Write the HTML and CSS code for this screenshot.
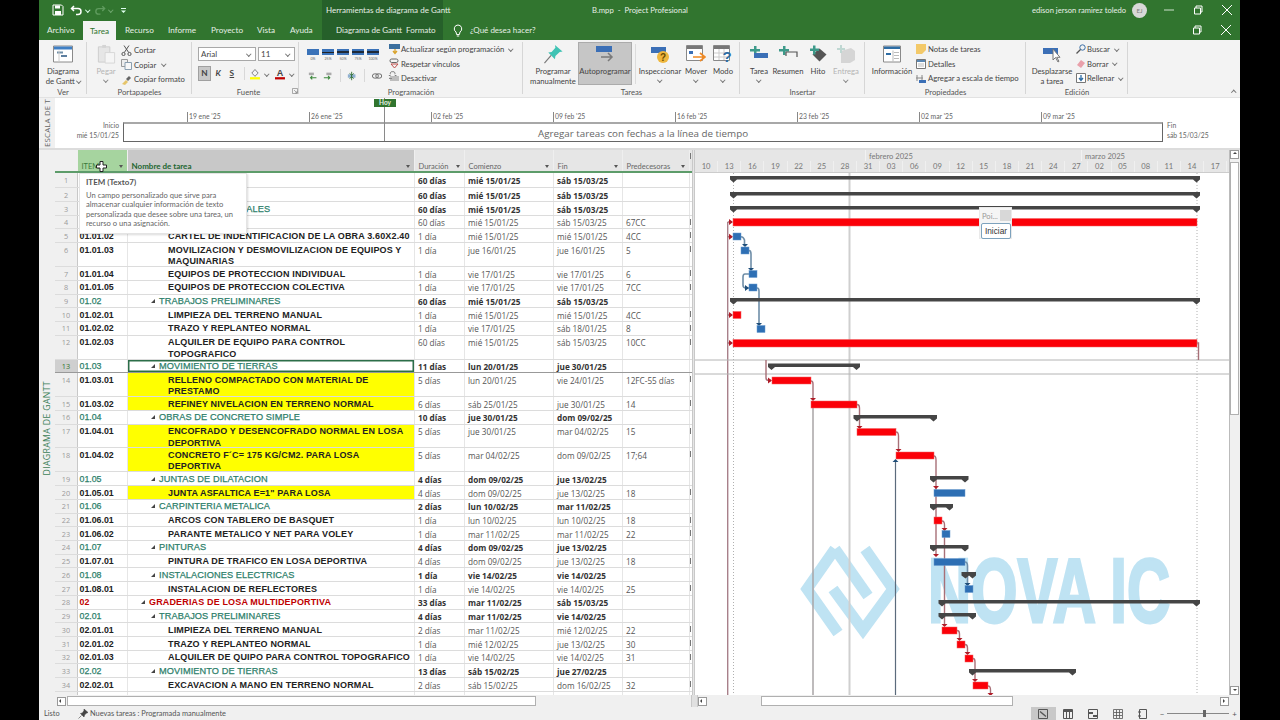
FILE: index.html
```html
<!DOCTYPE html>
<html lang="es">
<head>
<meta charset="utf-8">
<title>B.mpp - Project Profesional</title>
<link rel="stylesheet" href="styles.css">
</head>
<body>
<div class="app">
  <header class="title">
    <div class="qat">
      <svg width="12" height="12" viewBox="0 0 12 12"><path d="M1 1h8.5L11 2.5V11H1z" fill="none" stroke="#fff"/><path d="M3 1.5h5v3H3zM3 7h6v4H3z" fill="#fff"/></svg>
      <svg class="q-undo" width="13" height="12" viewBox="0 0 13 12"><path d="M4 2L1.5 4.5 4 7M2 4.5h6a3 3 0 0 1 0 6H6" fill="none" stroke="#fff" stroke-width="1.5"/></svg>
      <i class="chev white"></i>
      <svg class="q-redo" width="12" height="12" viewBox="0 0 13 12"><path d="M9 2l2.500 2.500L9 7M11 4.500H5a3 3 0 0 0 0 6h2" fill="none" stroke="#5f9b5e" stroke-width="1.500"/></svg>
      <i class="chev dim"></i>
      <svg class="q-custom" width="7" height="7" viewBox="0 0 7 7"><path d="M1 1h5v1H1zM1 3.500h5L3.500 6z" fill="#dfe"/></svg>
    </div>
    <div class="ctx-title">Herramientas de diagrama de Gantt</div>
    <div class="doc">B.mpp &nbsp;-&nbsp; Project Profesional</div>
    <div class="user">edison jerson ramirez toledo</div>
    <div class="avatar">EJ</div>
    <div class="win">
      <svg width="10" height="10" viewBox="0 0 10 10"><path d="M0 5h10" stroke="#cfe3cf"/></svg>
      <svg width="10" height="10" viewBox="0 0 10 10"><path d="M1.500 3h6v6h-6zM3 3V1h6v6H7.500" fill="none" stroke="#fff"/></svg>
      <svg width="10" height="10" viewBox="0 0 10 10"><path d="M0 0l10 10M10 0L0 10" stroke="#fff"/></svg>
    </div>
  </header>
  <nav class="tabs">
    <span class="tab t-archivo">Archivo</span>
    <span class="tab active">Tarea</span>
    <span class="tab t-rec">Recurso</span>
    <span class="tab t-inf">Informe</span>
    <span class="tab t-pro">Proyecto</span>
    <span class="tab t-vis">Vista</span>
    <span class="tab t-ayu">Ayuda</span>
    <span class="tab ctx">Diagrama de Gantt&nbsp; Formato</span>
    <svg class="bulb" width="10" height="13" viewBox="0 0 10 13"><path d="M5 1a3.800 3.800 0 0 0-2 7l.6 2.500h2.800L7 8a3.800 3.800 0 0 0-2-7zM3.800 12h2.400" fill="none" stroke="#fff"/></svg>
    <span class="tell">¿Qué desea hacer?</span>
    <div class="win win2">
      <svg width="10" height="10" viewBox="0 0 10 10"><path d="M1.500 3h6v6h-6zM3 3V1h6v6H7.500" fill="none" stroke="#fff"/></svg>
      <svg width="10" height="10" viewBox="0 0 10 10"><path d="M0 0l10 10M10 0L0 10" stroke="#fff"/></svg>
    </div>
  </nav>

  <section class="ribbon">
    <div class="grp g-ver">
      <div class="grp-body">
        <div class="big w-gantt">
          <svg width="20" height="17" viewBox="0 0 20 17"><path d="M.5.500h19v16H.500z" fill="#fff" stroke="#8a8a8a"/><path d="M1 1h18v3H1z" fill="#3f7fc4"/><path d="M4 6h6v2H4z" fill="#6f8fa8"/><path d="M8 9.500h6v2H8z" fill="#5d7fa0"/><path d="M6 5v11" stroke="#ccc"/></svg>
          <span>Diagrama</span><span>de Gantt <i class="chev"></i></span>
        </div>
      </div>
      <div class="grp-label">Ver</div>
    </div>

    <div class="grp g-port">
      <div class="grp-body">
        <div class="big w-paste off">
          <svg width="19" height="21" viewBox="0 0 19 21"><path d="M1 3h12v16H1z" fill="#e4e4e4" stroke="#c8c8c8"/><path d="M5 1h4v3H5z" fill="#cfcfcf"/><path d="M8 9h10v11H8z" fill="#f6f6f6" stroke="#d2d2d2"/></svg>
          <span>Pegar</span><i class="chev"></i>
        </div>
        <div class="small-col">
          <div class="sm"><svg width="11" height="11" viewBox="0 0 11 11"><circle cx="2.500" cy="9" r="1.600" fill="none" stroke="#555"/><circle cx="8.500" cy="9" r="1.600" fill="none" stroke="#555"/><path d="M3.300 7.500L8 .5M7.700 7.500L3 .5" stroke="#555"/></svg>Cortar</div>
          <div class="sm"><svg width="11" height="11" viewBox="0 0 11 11"><path d="M.5.500h6v7h-6z" fill="#eee" stroke="#999"/><path d="M4 3.500h6.500v7H4z" fill="#f7f7f7" stroke="#8a9fb0"/></svg>Copiar <i class="chev c-gap"></i></div>
          <div class="sm"><svg width="11" height="11" viewBox="0 0 11 11"><path d="M1 10l4-4 2 2-3 3z" fill="#e6c56a"/><path d="M5 5l3-3 2 2-3 3z" fill="#666"/></svg>Copiar formato</div>
        </div>
      </div>
      <div class="grp-label">Portapapeles</div>
    </div>

    <div class="grp g-font">
      <div class="grp-body col">
        <div class="font-row">
          <span class="select s-font">Arial<i class="chev"></i></span>
          <span class="select s-size">11<i class="chev"></i></span>
        </div>
        <div class="font-row r2">
          <span class="fmt on">N</span><span class="fmt it">K</span><span class="fmt un">S</span>
          <b class="vsep"></b>
          <svg width="11" height="12" viewBox="0 0 11 12"><path d="M5.500 1l3.500 4-3.500 3.500L2 5z" fill="#f4f4f4" stroke="#777"/><path d="M0 9.500h11V12H0z" fill="#ffff00"/></svg>
          <i class="chev c-fill"></i>
          <svg class="a-color" width="11" height="12" viewBox="0 0 11 12"><text x="5.500" y="8" text-anchor="middle" class="a-txt">A</text><path d="M0 9.500h11V12H0z" fill="#c00000"/></svg>
          <i class="chev c-fill"></i>
        </div>
      </div>
      <div class="grp-label">Fuente<svg class="launch" width="6" height="6" viewBox="0 0 6 6"><path d="M.5 5.500V.5h5v5zM2 2l3 3M5 3v2H3" fill="none" stroke="#888" stroke-width=".7"/></svg></div>
    </div>

    <div class="grp g-prog">
      <div class="grp-body">
        <div class="sched">
          <div class="pct-row">
            <span class="pct"><b></b>0%</span><span class="pct"><b class="p25"></b>25%</span><span class="pct"><b class="p50"></b>50%</span><span class="pct"><b class="p75"></b>75%</span><span class="pct"><b class="p100"></b>100%</span>
          </div>
          <div class="link-row">
            <svg width="11" height="10" viewBox="0 0 11 10"><path d="M1 1h6v3H1z" fill="#aaa"/><path d="M10 7H3M5 5L3 7l2 2" fill="none" stroke="#3e8a3e" stroke-width="1.300"/></svg>
            <svg width="11" height="10" viewBox="0 0 11 10"><path d="M4 1h6v3H4z" fill="#aaa"/><path d="M1 7h7M6 5l2 2-2 2" fill="none" stroke="#3e8a3e" stroke-width="1.300"/></svg>
            <b class="vsep"></b>
            <svg width="11" height="10" viewBox="0 0 11 10"><path d="M1 3h9v4H1z" fill="#8fb0d0"/><path d="M5.500 0v10M3 2l2.500 2L8 2M3 8l2.500-2L8 8" fill="none" stroke="#2a6a2a"/></svg>
            <b class="vsep"></b>
            <svg width="12" height="8" viewBox="0 0 12 8"><rect x=".5" y="1.500" width="7" height="5" rx="2.500" fill="none" stroke="#666" stroke-width="1.100"/><rect x="4.500" y="1.500" width="7" height="5" rx="2.500" fill="none" stroke="#666" stroke-width="1.100"/></svg>
            <svg width="11" height="11" viewBox="0 0 11 11"><path d="M3 4a2 2 0 0 1 2-3h1a2 2 0 0 1 2 3M3 7a2 2 0 0 0 2 3h1a2 2 0 0 0 2-3M1 5.500h2M8 5.500h2" fill="none" stroke="#666"/></svg>
          </div>
        </div>
        <div class="small-col">
          <div class="sm"><svg width="11" height="11" viewBox="0 0 11 11"><path d="M0 0h11v5H0z" fill="#3b6f9e"/><path d="M6 5v4M4 7l2 2.500L8 7" fill="none" stroke="#d9a32b" stroke-width="1.300"/></svg>Actualizar según programación <i class="chev c-gap"></i></div>
          <div class="sm"><svg width="11" height="11" viewBox="0 0 11 11"><rect x="1" y="1" width="8" height="3.500" rx="1.700" fill="none" stroke="#666"/><path d="M2 6l3.500 4L9 6z" fill="none" stroke="#c0504d"/></svg>Respetar vínculos</div>
          <div class="sm"><svg width="11" height="11" viewBox="0 0 11 11"><path d="M1 3h9v5H1z" fill="#bdbdbd"/><path d="M0 5.500h3" stroke="#888"/></svg>Desactivar</div>
        </div>
      </div>
      <div class="grp-label">Programación</div>
    </div>

    <div class="grp g-task">
      <div class="grp-body">
        <div class="big w-manual">
          <svg width="21" height="21" viewBox="0 0 21 21"><path d="M12 1l8 7-3 .5-4.500 4L12 16 5 9l3.500-.5 4-4.500z" fill="#3fc3b4"/><path d="M8 12l-7 8" stroke="#777" stroke-width="1.200"/></svg>
          <span>Programar</span><span>manualmente</span>
        </div>
        <div class="big w-auto">
          <svg width="20" height="18" viewBox="0 0 20 18"><path d="M1 1h16v6H1z" fill="#3b6fb6"/><path d="M6 12h11M13 8l4 4-4 4" fill="none" stroke="#7a7a7a" stroke-width="1.500"/></svg>
          <span>Autoprogramar</span>
        </div>
        <b class="gsep"></b>
        <div class="big w-insp">
          <svg width="20" height="20" viewBox="0 0 20 20"><path d="M1 3h15v6H1z" fill="#3b6fb6"/><circle cx="13" cy="13" r="6" fill="#efb73e"/><text x="13" y="16.500" text-anchor="middle" class="q-txt">?</text></svg>
          <span>Inspeccionar</span><i class="chev"></i>
        </div>
        <div class="big w-move">
          <svg width="20" height="20" viewBox="0 0 20 20"><path d="M.5 1.500h16v15H.5z" fill="#fff" stroke="#888"/><path d="M1 2h15v3H1z" fill="#777"/><path d="M3 7h4v3H3z" fill="#3b6fb6"/><path d="M7 13h11M14 9l5 4-5 4" fill="none" stroke="#f08a24" stroke-width="1.700"/></svg>
          <span>Mover</span><i class="chev"></i>
        </div>
        <div class="big w-mode">
          <svg width="20" height="20" viewBox="0 0 20 20"><path d="M.5 1.500h16v15H.5z" fill="#fff" stroke="#888"/><path d="M1 2h15v3H1z" fill="#777"/><path d="M6 5v11M11 5v11M1 9h15M1 13h15" stroke="#ccc"/><text x="14" y="18" text-anchor="middle" class="q2-txt">?</text></svg>
          <span>Modo</span><i class="chev"></i>
        </div>
      </div>
      <div class="grp-label">Tareas</div>
    </div>

    <div class="grp g-ins">
      <div class="grp-body">
        <div class="big w-itask">
          <svg width="19" height="16" viewBox="0 0 19 16"><path d="M4 0h2.500v3H10v2.500H6.500V9H4V5.500H0V3h4z" fill="#3d9a8a"/><path d="M4 7h14v5H4z" fill="#3b6fb6"/></svg>
          <span>Tarea</span><i class="chev"></i>
        </div>
        <div class="big w-sum">
          <svg width="19" height="16" viewBox="0 0 19 16"><path d="M4 0h2.500v3H10v2.500H6.500V9H4V5.500H0V3h4z" fill="#3d9a8a"/><path d="M7 6h11v5M7 6v4" fill="none" stroke="#555" stroke-width="1.200"/></svg>
          <span>Resumen</span>
        </div>
        <div class="big w-hito">
          <svg width="17" height="17" viewBox="0 0 17 17"><path d="M9.500 3l7 6-7 7-7-7z" fill="#555"/><path d="M3 0h2.500v3H9v2.500H5.500V9H3V5.500H0V3h3z" fill="#3d9a8a"/></svg>
          <span>Hito</span>
        </div>
        <div class="big w-ent off">
          <svg width="18" height="18" viewBox="0 0 18 18"><path d="M4 6l10-3 4 3v9l-5 3H4z" fill="#d0d0d0"/><path d="M3 0h2v3h3v2H5v3H3V5H0V3h3z" fill="#b7d3cd"/></svg>
          <span>Entrega</span><i class="chev"></i>
        </div>
      </div>
      <div class="grp-label">Insertar</div>
    </div>

    <div class="grp g-prop">
      <div class="grp-body">
        <div class="big w-info">
          <svg width="18" height="17" viewBox="0 0 18 17"><path d="M.5.500h17v16H.5z" fill="#fff" stroke="#8a8a8a"/><path d="M1 1h16v2.500H1z" fill="#2e6da4"/><path d="M3 7.500h5v2H3z" fill="#2e6da4"/><path d="M10 5v11M11 7h5M11 10h5M11 13h5" stroke="#bbb"/></svg>
          <span>Información</span>
        </div>
        <div class="small-col">
          <div class="sm"><svg width="10" height="10" viewBox="0 0 10 10"><path d="M0 0h10v6L6 10H0z" fill="#f3c969"/></svg>Notas de tareas</div>
          <div class="sm"><svg width="10" height="10" viewBox="0 0 10 10"><path d="M.5.500h9v9h-9z" fill="#fff" stroke="#777"/><path d="M1 1h8v2H1z" fill="#5b87b2"/><path d="M2 5h6M2 7h6" stroke="#bbb"/></svg>Detalles</div>
          <div class="sm"><svg width="10" height="10" viewBox="0 0 10 10"><path d="M0 5h7M1 2v6M6 2v6" stroke="#888"/><path d="M3 7h7v3H3z" fill="#3b6fb6"/></svg>Agregar a escala de tiempo</div>
        </div>
      </div>
      <div class="grp-label">Propiedades</div>
    </div>

    <div class="grp g-edit">
      <div class="grp-body">
        <div class="big w-goto">
          <svg width="18" height="18" viewBox="0 0 18 18"><path d="M0 3h15v6H0z" fill="#3b6fb6"/><path d="M10 4v11l2.500-2.500L15 17l1-.7-2.300-4H17z" fill="#fff" stroke="#777"/></svg>
          <span>Desplazarse</span><span>a tarea</span>
        </div>
        <div class="small-col">
          <div class="sm"><svg width="10" height="10" viewBox="0 0 10 10"><circle cx="6.500" cy="3.500" r="2.700" fill="none" stroke="#3a6ea5"/><path d="M4.500 5.500L.5 9.500" stroke="#555" stroke-width="1.200"/></svg>Buscar <i class="chev c-gap"></i></div>
          <div class="sm"><svg width="10" height="10" viewBox="0 0 10 10"><path d="M5 1l4 3-4 5-4-3z" fill="#e9a0aa"/></svg>Borrar <i class="chev"></i></div>
          <div class="sm"><svg width="10" height="10" viewBox="0 0 10 10"><path d="M.5.500h9v9h-9z" fill="#fff" stroke="#777"/><path d="M5 2v5M3 5l2 2.500L7 5" fill="none" stroke="#2e6da4" stroke-width="1.300"/></svg>Rellenar <i class="chev"></i></div>
        </div>
      </div>
      <div class="grp-label">Edición</div>
    </div>
    <div class="collapse"><i class="chev up"></i></div>
  </section>

  <section class="timeline">
    <div class="rail"><span class="rail-txt">ESCALA DE T</span></div>
    <div class="tl-start"><span>Inicio</span><span>mié 15/01/25</span></div>
    <div class="tl-mid">
      <div class="tl-ticks">
        <span>19 ene '25</span><span>26 ene '25</span><span>02 feb '25</span><span>09 feb '25</span><span>16 feb '25</span><span>23 feb '25</span><span>02 mar '25</span><span>09 mar '25</span>
      </div>
      <div class="tl-box">Agregar tareas con fechas a la línea de tiempo</div>
      <div class="today"><span>Hoy</span></div>
    </div>
    <div class="tl-end"><span>Fin</span><span>sáb 15/03/25</span></div>
  </section>
  <div class="split"></div>

  <section class="work">
    <div class="rail"><span class="rail-txt green">DIAGRAMA DE GANTT</span></div>
    <div class="center">
      <div class="panes">
        <div class="sheet">
          <div class="row head">
            <span class="num"></span>
            <span class="h-item">ITEM<i class="dd"></i></span>
            <span class="h-name">Nombre de tarea<i class="dd"></i></span>
            <span>Duración<i class="dd"></i></span><span>Comienzo<i class="dd"></i></span><span>Fin<i class="dd"></i></span><span>Predecesoras<i class="dd"></i></span><span class="x"></span>
          </div>
          <svg class="cursor" width="11" height="11" viewBox="0 0 11 11"><path d="M4 .5h3V4h3.500v3H7v3.500H4V7H.5V4H4z" fill="#fff" stroke="#222"/></svg>
          <div class="rows">
            <div class="row first sum"><span class="num">1</span><span class="id">00</span><span class="name lv1 tw">LOSA</span><span>60 días</span><span>mié 15/01/25</span><span>sáb 15/03/25</span><span></span><span class="x"></span></div>
            <div class="row sum"><span class="num">2</span><span class="id red">01</span><span class="name lv1 tw red">LOSA</span><span>60 días</span><span>mié 15/01/25</span><span>sáb 15/03/25</span><span></span><span class="x"></span></div>
            <div class="row sum"><span class="num">3</span><span class="id grn">01.01</span><span class="name lv2 tw grn">OBRAS PROVISIONALES</span><span>60 días</span><span>mié 15/01/25</span><span>sáb 15/03/25</span><span></span><span class="x"></span></div>
            <div class="row"><span class="num">4</span><span class="id">01.01.01</span><span class="name lv3">CASETA</span><span>60 días</span><span>mié 15/01/25</span><span>sáb 15/03/25</span><span>67CC</span><span class="x"></span></div>
            <div class="row"><span class="num">5</span><span class="id">01.01.02</span><span class="name lv3">CARTEL DE INDENTIFICACION DE LA OBRA 3.60X2.40</span><span>1 día</span><span>mié 15/01/25</span><span>mié 15/01/25</span><span>4CC</span><span class="x"></span></div>
            <div class="row tall"><span class="num">6</span><span class="id">01.01.03</span><span class="name lv3">MOVILIZACION Y DESMOVILIZACION DE EQUIPOS Y<br>MAQUINARIAS</span><span>1 día</span><span>jue 16/01/25</span><span>jue 16/01/25</span><span>5</span><span class="x"></span></div>
            <div class="row"><span class="num">7</span><span class="id">01.01.04</span><span class="name lv3">EQUIPOS DE PROTECCION INDIVIDUAL</span><span>1 día</span><span>vie 17/01/25</span><span>vie 17/01/25</span><span>6</span><span class="x"></span></div>
            <div class="row"><span class="num">8</span><span class="id">01.01.05</span><span class="name lv3">EQUIPOS DE PROTECCION COLECTIVA</span><span>1 día</span><span>vie 17/01/25</span><span>vie 17/01/25</span><span>7CC</span><span class="x"></span></div>
            <div class="row sum"><span class="num">9</span><span class="id grn">01.02</span><span class="name lv2 tw grn">TRABAJOS PRELIMINARES</span><span>60 días</span><span>mié 15/01/25</span><span>sáb 15/03/25</span><span></span><span class="x"></span></div>
            <div class="row"><span class="num">10</span><span class="id">01.02.01</span><span class="name lv3">LIMPIEZA DEL TERRENO MANUAL</span><span>1 día</span><span>mié 15/01/25</span><span>mié 15/01/25</span><span>4CC</span><span class="x"></span></div>
            <div class="row"><span class="num">11</span><span class="id">01.02.02</span><span class="name lv3">TRAZO Y REPLANTEO NORMAL</span><span>1 día</span><span>vie 17/01/25</span><span>sáb 18/01/25</span><span>8</span><span class="x"></span></div>
            <div class="row tall"><span class="num">12</span><span class="id">01.02.03</span><span class="name lv3">ALQUILER DE EQUIPO PARA CONTROL<br>TOPOGRAFICO</span><span>60 días</span><span>mié 15/01/25</span><span>sáb 15/03/25</span><span>10CC</span><span class="x"></span></div>
            <div class="row sum sel"><span class="num">13</span><span class="id grn">01.03</span><span class="name lv2 tw grn">MOVIMIENTO DE TIERRAS</span><span>11 días</span><span>lun 20/01/25</span><span>jue 30/01/25</span><span></span><span class="x"></span></div>
            <div class="row tall"><span class="num">14</span><span class="id">01.03.01</span><span class="name lv3 yel">RELLENO COMPACTADO CON MATERIAL DE<br>PRESTAMO</span><span>5 días</span><span>lun 20/01/25</span><span>vie 24/01/25</span><span>12FC-55 días</span><span class="x"></span></div>
            <div class="row"><span class="num">15</span><span class="id">01.03.02</span><span class="name lv3 yel">REFINEY NIVELACION EN TERRENO NORMAL</span><span>6 días</span><span>sáb 25/01/25</span><span>jue 30/01/25</span><span>14</span><span class="x"></span></div>
            <div class="row sum"><span class="num">16</span><span class="id grn">01.04</span><span class="name lv2 tw grn">OBRAS DE CONCRETO SIMPLE</span><span>10 días</span><span>jue 30/01/25</span><span>dom 09/02/25</span><span></span><span class="x"></span></div>
            <div class="row tall"><span class="num">17</span><span class="id">01.04.01</span><span class="name lv3 yel">ENCOFRADO Y DESENCOFRADO NORMAL EN LOSA<br>DEPORTIVA</span><span>5 días</span><span>jue 30/01/25</span><span>mar 04/02/25</span><span>15</span><span class="x"></span></div>
            <div class="row tall"><span class="num">18</span><span class="id">01.04.02</span><span class="name lv3 yel">CONCRETO F´C= 175 KG/CM2. PARA LOSA<br>DEPORTIVA</span><span>5 días</span><span>mar 04/02/25</span><span>dom 09/02/25</span><span>17;64</span><span class="x"></span></div>
            <div class="row sum"><span class="num">19</span><span class="id grn">01.05</span><span class="name lv2 tw grn">JUNTAS DE DILATACION</span><span>4 días</span><span>dom 09/02/25</span><span>jue 13/02/25</span><span></span><span class="x"></span></div>
            <div class="row"><span class="num">20</span><span class="id">01.05.01</span><span class="name lv3 yel">JUNTA ASFALTICA E=1" PARA LOSA</span><span>4 días</span><span>dom 09/02/25</span><span>jue 13/02/25</span><span>18</span><span class="x"></span></div>
            <div class="row sum"><span class="num">21</span><span class="id grn">01.06</span><span class="name lv2 tw grn">CARPINTERIA METALICA</span><span>2 días</span><span>lun 10/02/25</span><span>mar 11/02/25</span><span></span><span class="x"></span></div>
            <div class="row"><span class="num">22</span><span class="id">01.06.01</span><span class="name lv3">ARCOS CON TABLERO DE BASQUET</span><span>1 día</span><span>lun 10/02/25</span><span>lun 10/02/25</span><span>18</span><span class="x"></span></div>
            <div class="row"><span class="num">23</span><span class="id">01.06.02</span><span class="name lv3">PARANTE METALICO Y NET PARA VOLEY</span><span>1 día</span><span>mar 11/02/25</span><span>mar 11/02/25</span><span>22</span><span class="x"></span></div>
            <div class="row sum"><span class="num">24</span><span class="id grn">01.07</span><span class="name lv2 tw grn">PINTURAS</span><span>4 días</span><span>dom 09/02/25</span><span>jue 13/02/25</span><span></span><span class="x"></span></div>
            <div class="row"><span class="num">25</span><span class="id">01.07.01</span><span class="name lv3">PINTURA DE TRAFICO EN LOSA DEPORTIVA</span><span>4 días</span><span>dom 09/02/25</span><span>jue 13/02/25</span><span>18</span><span class="x"></span></div>
            <div class="row sum"><span class="num">26</span><span class="id grn">01.08</span><span class="name lv2 tw grn">INSTALACIONES ELECTRICAS</span><span>1 día</span><span>vie 14/02/25</span><span>vie 14/02/25</span><span></span><span class="x"></span></div>
            <div class="row"><span class="num">27</span><span class="id">01.08.01</span><span class="name lv3">INSTALACION DE REFLECTORES</span><span>1 día</span><span>vie 14/02/25</span><span>vie 14/02/25</span><span>25</span><span class="x"></span></div>
            <div class="row sum"><span class="num">28</span><span class="id red">02</span><span class="name lv1 tw red">GRADERIAS DE LOSA MULTIDEPORTIVA</span><span>33 días</span><span>mar 11/02/25</span><span>sáb 15/03/25</span><span></span><span class="x"></span></div>
            <div class="row sum"><span class="num">29</span><span class="id grn">02.01</span><span class="name lv2 tw grn">TRABAJOS PRELIMINARES</span><span>4 días</span><span>mar 11/02/25</span><span>vie 14/02/25</span><span></span><span class="x"></span></div>
            <div class="row"><span class="num">30</span><span class="id">02.01.01</span><span class="name lv3">LIMPIEZA DEL TERRENO MANUAL</span><span>2 días</span><span>mar 11/02/25</span><span>mié 12/02/25</span><span>22</span><span class="x"></span></div>
            <div class="row"><span class="num">31</span><span class="id">02.01.02</span><span class="name lv3">TRAZO Y REPLANTEO NORMAL</span><span>1 día</span><span>mié 12/02/25</span><span>jue 13/02/25</span><span>30</span><span class="x"></span></div>
            <div class="row"><span class="num">32</span><span class="id">02.01.03</span><span class="name lv3">ALQUILER DE QUIPO PARA CONTROL TOPOGRAFICO</span><span>1 día</span><span>vie 14/02/25</span><span>vie 14/02/25</span><span>31</span><span class="x"></span></div>
            <div class="row sum"><span class="num">33</span><span class="id grn">02.02</span><span class="name lv2 tw grn">MOVIMIENTO DE TIERRAS</span><span>13 días</span><span>sáb 15/02/25</span><span>jue 27/02/25</span><span></span><span class="x"></span></div>
            <div class="row"><span class="num">34</span><span class="id">02.02.01</span><span class="name lv3">EXCAVACION A MANO EN TERRENO NORMAL</span><span>2 días</span><span>sáb 15/02/25</span><span>dom 16/02/25</span><span>32</span><span class="x"></span></div>
            <div class="row tall"><span class="num">35</span><span class="id">02.02.02</span><span class="name lv3">RELLENO COMPACTADO CON MATERIAL DE<br>PRESTAMO</span><span>3 días</span><span>lun 17/02/25</span><span>mié 19/02/25</span><span>34</span><span class="x"></span></div>
          </div>
          <div class="tooltip">
            <strong>ITEM (Texto7)</strong>
            <p>Un campo personalizado que sirve para almacenar cualquier información de texto personalizada que desee sobre una tarea, un recurso o una asignación.</p>
          </div>
        </div>
        <div class="sash"></div>
        <div class="chart">
          <div class="scale">
            <div class="months"><span class="m0"></span><span class="m1">febrero 2025</span><span class="m2">marzo 2025</span></div>
            <div class="days"><span>10</span><span>13</span><span>16</span><span>19</span><span>22</span><span>25</span><span>28</span><span>31</span><span>03</span><span>06</span><span>09</span><span>12</span><span>15</span><span>18</span><span>21</span><span>24</span><span>27</span><span>02</span><span>05</span><span>08</span><span>11</span><span>14</span><span>17</span></div>
          </div>
          <svg class="plot" width="534" height="522" viewBox="695 173 534 522">
            <text x="928" y="622" textLength="242" lengthAdjust="spacingAndGlyphs" class="wm-text">NOVA IC</text>
            <g class="wm-logo">
              <path d="M835 549L807 589L838 633"/>
              <path d="M835 549L868 596"/>
              <path d="M865 549L893 589L863 630L833 589"/>
            </g>
            <g class="v-lines">
              <path class="vl-today" d="M849.500 173V695"/>
              <path class="vl-gray" d="M813 405V695"/>
              <path class="vl-navy" d="M895.500 462V695"/>
              <path class="vl-red" d="M727.700 222V695"/>
              <path class="vl-dot" d="M733.500 173V695M1197 173V695"/>
              <path class="hl" d="M695 360H1229M695 374H1229"/>
            </g>
            <g class="lnk-red">
              <path d="M727.700 222H732M727.700 236.700H732M727.700 315H732M727.700 343H732M1197 343H1198.500V360"/>
              <path d="M766 360V378Q766 380.500 769 380.500H771"/>
              <path d="M811 381Q813 381 813 384V400"/>
              <path d="M857 404.500Q859.500 404.500 859.500 408V428"/>
              <path d="M896 432Q898.500 432 898.500 436V451"/>
              <path d="M934 456Q936 456 936 460V556"/>
              <path d="M942 521Q944.500 521 944.500 525V626"/>
              <path d="M957 630.500Q959.500 630.500 959.500 634V640"/>
              <path d="M965 644.500Q967.500 644.500 967.500 648V654"/>
              <path d="M973 658.500Q975 658.500 975 662V681"/>
              <path d="M988 686Q990.500 686 990.500 690V695"/>
            </g>
            <g class="lnk-blue">
              <path d="M741 236.700Q743.500 236.700 744.500 240V246"/>
              <path d="M749 250.500Q751 250.500 751 254V270"/>
              <path d="M749 274H745Q743 274 743 277V285Q743 288 746 288H749"/>
              <path d="M757 288Q759 288 759 291V325"/>
              <path d="M965 562Q967.500 562 967.500 566V585"/>
              <path d="M942 534H944"/>
            </g>
            <path class="ar-red" d="M733 222l-4-3v6zM733 236.700l-4-3v6zM733 315l-4-3v6zM733 343l-4-3v6zM772 380.500l-4-3v6zM813 401l-3-3h6zM859.500 429l-3-3h6zM898.500 452l-3-3h6zM936 489l-3-3h6zM936 557l-3-3h6zM944.500 531l-3-3h6zM944.500 627l-3-3h6zM959.500 641l-3-3h6zM967.500 655l-3-3h6zM975 682l-3-3h6zM990.500 696l-3-3h6z"/>
            <path class="ar-blue" d="M745 247l-3-3h6zM751 271l-3-3h6zM749 288l-4-3v6zM759 326l-3-3h6zM967.500 586l-3-3h6zM895.500 459l3 3h-6z"/>
            <g class="bar-sum">
              <path d="M730 176H1200v3.500l-3.500 3-3.500-3H737l-3.500 3-3.500-3z"/>
              <path d="M730 192H1200v3.500l-3.500 3-3.500-3H737l-3.500 3-3.500-3z"/>
              <path d="M730 206H1200v3.500l-3.500 3-3.500-3H737l-3.500 3-3.500-3z"/>
              <path d="M730 298H1200v3.500l-3.500 3-3.500-3H737l-3.500 3-3.500-3z"/>
              <path d="M768 363.500H860v3.500l-3.500 3-3.500-3H775l-3.500 3-3.500-3z"/>
              <path d="M853.500 415H937v3.500l-3.500 3-3.500-3H860.500l-3.500 3-3.500-3z"/>
              <path d="M930 476H968.500v3.500l-3.500 3-3.500-3H937l-3.500 3-3.500-3z"/>
              <path d="M930 504H953v3.500l-3.500 3-3.500-3H937l-3.500 3-3.500-3z"/>
              <path d="M930 545H968.500v3.500l-3.500 3-3.500-3H937l-3.500 3-3.500-3z"/>
              <path d="M961.500 572H976v3.500l-3.500 3-3.500-3h0l-3.500 3-4-3z"/>
              <path d="M938.500 600H1200v3.500l-3.500 3-3.500-3H945.500l-3.500 3-3.500-3z"/>
              <path d="M938.500 613H976v3.500l-3.500 3-3.500-3H945.500l-3.500 3-3.500-3z"/>
              <path d="M969 669H1076v3.500l-3.500 3-3.500-3H976l-3.500 3-3.500-3z"/>
            </g>
            <g class="bar-red">
              <rect x="733" y="218.500" width="464" height="7.500"/>
              <rect x="733" y="311.500" width="8" height="7"/>
              <rect x="733" y="339.500" width="464" height="7.500"/>
              <rect x="772" y="377" width="39" height="7"/>
              <rect x="811" y="401" width="46" height="7"/>
              <rect x="857" y="428.500" width="39" height="7"/>
              <rect x="896" y="452" width="38" height="7"/>
              <rect x="934" y="517" width="8" height="7"/>
              <rect x="942" y="627" width="15" height="7"/>
              <rect x="957" y="641" width="8" height="7"/>
              <rect x="965" y="655" width="8" height="7"/>
              <rect x="973" y="682" width="15" height="7"/>
            </g>
            <g class="bar-blue">
              <rect x="733" y="233" width="8" height="7"/>
              <rect x="741" y="247" width="8" height="7"/>
              <rect x="749" y="270.500" width="8" height="7"/>
              <rect x="749" y="284" width="8" height="7"/>
              <rect x="757" y="325.500" width="8" height="7"/>
              <rect x="934" y="489.500" width="31" height="7"/>
              <rect x="942" y="530.500" width="8" height="7"/>
              <rect x="934" y="558.500" width="31" height="7"/>
              <rect x="965" y="585.500" width="8" height="7"/>
            </g>
          </svg>
          <div class="popup">
            <div class="pop-head"><span>Poi...</span><b></b></div>
            <div class="pop-btn">Iniciar</div>
          </div>
        </div>
        <div class="vbar"><span class="btn up-b"></span><span class="v-thumb"></span><span class="v-fill"></span><span class="btn dn-b"></span></div>
      </div>
      <div class="hbar">
        <span class="btn l-b"></span><span class="h-thumb t-left"></span><span class="h-fill"></span>
        <span class="h-gap"></span>
        <span class="btn l-b"></span><span class="h-sp"></span><span class="h-thumb t-right"></span><span class="h-fill"></span><span class="btn r-b"></span>
      </div>
    </div>
  </section>

  <footer class="status">
    <span class="st-ready">Listo</span>
    <svg class="st-pin" width="10" height="10" viewBox="0 0 10 10"><path d="M6 0l4 3.500-1.500.5L6.500 6 6 8 2.500 4.500l2-.5L6 1.500zM3.500 6.500L.5 9.500" fill="#444" stroke="#444" stroke-width=".6"/></svg>
    <span class="st-new">Nuevas tareas : Programada manualmente</span>
    <div class="views">
      <span class="view on"><svg width="10" height="10" viewBox="0 0 10 10"><path d="M.5.500h9v9h-9z" fill="none" stroke="#555"/><path d="M2 2.500l6 5" stroke="#555" stroke-width="1.400"/></svg></span>
      <span class="view"><svg width="10" height="10" viewBox="0 0 10 10"><path d="M.5.500h9v9h-9z" fill="none" stroke="#555"/><path d="M1 1h8v2H1z" fill="#555"/><path d="M3.500 3v6M6.500 3v6" stroke="#555"/></svg></span>
      <span class="view"><svg width="10" height="10" viewBox="0 0 10 10"><path d="M.5.500h9v9h-9z" fill="none" stroke="#555"/><path d="M1 3h4v2H1zM5 6h4v2H5z" fill="#555"/></svg></span>
      <span class="view"><svg width="10" height="10" viewBox="0 0 10 10"><path d="M.5.500h9v9h-9zM3.500 1v8M6.500 1v8M1 3.500h8M1 6.500h8" fill="none" stroke="#555" stroke-width=".8"/></svg></span>
      <span class="view"><svg width="10" height="10" viewBox="0 0 10 10"><path d="M2.500.5h7v9h-7zM1 3h3M1 7h3" fill="none" stroke="#555"/></svg></span>
      <div class="zoom"><span>−</span><div class="slider"><b></b></div><span>+</span></div>
    </div>
  </footer>
</div>
</body>
</html>
```
FILE: styles.css
```css
* { box-sizing: border-box; }
html, body { margin: 0; height: 100%; background: #000; overflow: hidden; }
body { font-family: Lato, "Liberation Sans", sans-serif; font-size: 8.2px; color: #444; }
i, b { display: inline-block; font-style: normal; }
.app { width: 1201px; height: 720px; margin-left: 39px; display: flex; flex-direction: column; background: #fff; }

/* title bar */
.title { height: 20px; background: #31752f; color: #e6efe6; display: flex; align-items: center; position: relative; }
.qat { display: flex; align-items: center; padding-left: 13px; width: 283px; }
.q-undo { margin-left: 6px; }
.q-redo { margin-left: 4px; }
.q-custom { margin-left: 8px; }
.ctx-title { width: 121px; height: 20px; line-height: 20px; background: #26602a; padding-left: 4px; white-space: nowrap; font-size: 8px; }
.doc { width: 244px; padding-left: 149px; white-space: nowrap; font-size: 7.700px; }
.user { margin-left: 345px; white-space: nowrap; font-size: 7.600px; width: 100px; }
.avatar { width: 15px; height: 15px; border-radius: 50%; background: #d8d8d8; color: #7b7b7b; font-size: 6px; text-align: center; line-height: 15px; margin-left: 0; }
.win { display: flex; gap: 19px; margin-left: 17px; }
.win2 { position: absolute; right: 9px; top: 5px; margin: 0; }

/* tabs */
.tabs { height: 20px; background: #31752f; display: flex; align-items: center; color: #e6efe6; position: relative; font-size: 8.200px; }
.tab { white-space: nowrap; }
.t-archivo { margin-left: 8px; width: 36px; }
.tab.active { background: #f3f3f3; color: #31752f; width: 33px; height: 19px; line-height: 20px; text-align: center; margin-top: 1px; }
.t-rec { margin-left: 9px; width: 43px; }
.t-inf { width: 43px; }
.t-pro { width: 46px; }
.t-vis { width: 33px; }
.t-ayu { width: 32px; }
.tab.ctx { background: #26602a; width: 121px; height: 20px; line-height: 20px; padding-left: 14px; font-size: 8px; }
.bulb { margin-left: 10px; }
.tell { margin-left: 7px; font-size: 8px; }

/* ribbon */
.ribbon { height: 58px; background: #f3f3f3; display: flex; position: relative; color: #444; border-bottom: 1px solid #e2e2e2; font-size: 7.700px; }
.grp { display: flex; flex-direction: column; position: relative; padding-top: 2px; }
.grp::after { content: ""; position: absolute; right: 0; top: 2px; bottom: 3px; width: 1px; background: #d6d6d6; }
.grp-body { height: 46px; display: flex; }
.grp-body.col { flex-direction: column; }
.grp-label { text-align: center; font-size: 7.700px; line-height: 9px; color: #555; }
.g-ver { width: 48px; }
.g-port { width: 105px; }
.g-font { width: 107px; padding-left: 6px; }
.g-prog { width: 224px; }
.g-task { width: 217px; }
.g-ins { width: 125px; }
.g-prop { width: 161px; }
.g-edit { width: 102px; }
.collapse { flex: 1; position: relative; }

.big { display: flex; flex-direction: column; align-items: center; line-height: 10px; padding-top: 2px; white-space: nowrap; flex: none; }
.big svg { height: 20px; margin-bottom: 2px; flex: none; }
.off { color: #aaa; opacity: .85; }
.chev { width: 3.500px; height: 3.500px; border-right: 1px solid #777; border-bottom: 1px solid #777; transform: rotate(45deg); vertical-align: 2px; flex: none; }
.chev.white { border-color: #dfe; margin-left: 3px; }
.chev.dim { border-color: #6fa66e; margin-left: 3px; }
.chev.up { position: absolute; right: 5px; bottom: 3px; transform: rotate(225deg); }
.c-gap { margin-left: 3px; }

.w-gantt { width: 48px; }
.w-paste { width: 36px; margin-left: 1px; }
.small-col { display: flex; flex-direction: column; padding-top: 0; }
.sm { height: 14.500px; display: flex; align-items: center; white-space: nowrap; line-height: 14px; gap: 2px; }
.sm svg { flex: none; }
.sm .chev { margin-left: 4px; margin-top: -2px; }
.g-port .small-col { margin-left: -3px; padding-top: 1px; }
.g-port .sm { gap: 2px; }

.font-row { display: flex; align-items: center; }
.font-row:first-child { margin-top: 5px; gap: 2px; }
.r2 { margin-top: 5px; }
.select { height: 14px; border: 1px solid #a8a8a8; background: #fff; display: flex; align-items: center; justify-content: space-between; padding: 0 5px 0 2px; font-size: 8px; }
.s-font { width: 58px; }
.s-size { width: 37px; }
.fmt { width: 14px; height: 15px; text-align: center; line-height: 14px; font-weight: 700; font-size: 8.300px; margin-right: 1px; color: #444; }
.fmt.on { background: #c8c8c8; border: 1px solid #a0a0a0; line-height: 13px; }
.fmt.it { font-style: italic; }
.fmt.un { text-decoration: underline; }
.vsep { width: 1px; height: 13px; background: #d8d8d8; margin: 0 5px; }
.c-fill { margin: 0 6px 0 5px; }
.a-txt { font: 700 10px "Liberation Sans", sans-serif; fill: #444; }
.launch { position: absolute; right: 1px; bottom: 3px; }

.sched { width: 90px; margin-left: 8px; padding-top: 7px; }
.pct-row { display: flex; gap: 3px; }
.pct { width: 12px; font-size: 3.600px; line-height: 5px; text-align: center; white-space: nowrap; color: #666; }
.pct b { display: block; height: 6px; background: #3a72b8; margin-bottom: 1px; }
.pct b.p25 { background: linear-gradient(#3a72b8 50%, #222 50%, #222 65%, #3a72b8 65%); }
.pct b.p50, .pct b.p75, .pct b.p100 { background: linear-gradient(#3a72b8 40%, #1f2a38 40%, #1f2a38 70%, #3a72b8 70%); }
.link-row { display: flex; align-items: center; gap: 6px; margin-top: 8px; padding-left: 1px; }
.link-row .vsep { margin: 0 1px; }
.g-prog .small-col { margin-left: -8px; }
.g-prog .sm { gap: 1px; }

.g-task .grp-body { padding-left: 7px; }
.w-manual { width: 46px; }
.w-auto { width: 54px; height: 43px; margin-left: 2px; background: #c6c6c6; border: 1px solid #ababab; margin-top: 0; padding-top: 1px; }
.gsep { width: 1px; height: 40px; background: #dcdcdc; margin: 2px 2px 0 3px; }
.w-insp { width: 44px; }
.w-move { width: 26px; margin-left: 1px; }
.w-mode { width: 26px; margin-left: 1px; }
.big > .chev { margin-top: 2px; }
.q-txt { font: 700 10px "Liberation Sans", sans-serif; fill: #6a4a00; }
.q2-txt { font: 700 15px "Liberation Sans", sans-serif; fill: #2e6da4; }

.g-ins .grp-body { padding-left: 8px; }
.w-itask { width: 22px; }
.w-sum { width: 32px; margin-left: 2px; }
.w-hito { width: 20px; margin-left: 4px; }
.w-ent { width: 30px; margin-left: 3px; }

.g-prop .grp-body { padding-left: 5px; }
.w-info { width: 44px; }
.g-prop .small-col { margin-left: 2px; }
.g-prop .sm { gap: 2px; }

.g-edit .grp-body { padding-left: 5px; }
.w-goto { width: 42px; }
.g-edit .small-col { margin-left: 3px; }
.g-edit .sm { gap: 1px; }

/* timeline */
.timeline { height: 50px; background: #fff; display: flex; position: relative; font-size: 6.800px; color: #666; }
.rail { width: 16px; background: #f0f0f0; display: flex; align-items: center; justify-content: center; flex: none; }
.rail-txt { writing-mode: vertical-rl; transform: rotate(180deg); white-space: nowrap; font-family: "Open Sans", sans-serif; font-size: 7.800px; color: #666; letter-spacing: .2px; }
.rail-txt.green { color: #3c7f58; font-size: 8.800px; letter-spacing: .3px; }
.tl-start, .tl-end { display: flex; flex-direction: column; padding-top: 23px; line-height: 9.500px; white-space: nowrap; }
.tl-start { width: 68px; text-align: right; padding-right: 4px; }
.tl-end { padding-left: 4px; }
.tl-mid { width: 1040px; position: relative; padding-top: 14px; }
.tl-ticks { display: flex; height: 10px; padding-left: 64px; line-height: 8px; }
.tl-ticks span { width: 122.400px; border-left: 1px solid #888; padding-left: 1px; white-space: nowrap; }
.tl-box { height: 20px; border: 1px solid #666; border-top: 2px solid #a8a8a8; text-align: center; font-family: "Open Sans", sans-serif; font-size: 9.800px; line-height: 19px; color: #666; }
.today { position: absolute; left: 261px; top: 0; height: 43px; border-left: 1px solid #8a8a8a; }
.today span { position: absolute; left: -11px; top: 1px; width: 22px; height: 8px; background: #31752f; color: #e8f2e8; font-size: 6.500px; font-weight: 700; text-align: center; line-height: 8px; }
.split { height: 2px; background: #dcdcdc; }

/* work area */
.work { flex: 1; display: flex; min-height: 0; }
.center { flex: 1; display: flex; flex-direction: column; min-width: 0; }
.panes { height: 545px; display: flex; }
.sheet { width: 637px; position: relative; overflow: hidden; flex: none; }
.sash { width: 3px; background: #e6e6e6; border-left: 1px solid #c8c8c8; border-right: 1px solid #c8c8c8; flex: none; }
.chart { width: 534px; position: relative; flex: none; }
.vbar { width: 11px; background: #f0f0f0; display: flex; flex-direction: column; flex: none; border-left: 1px solid #bbb; }

.row { display: grid; grid-template-columns: 23px 50px 287px 50px 89px 69px 67px 2px; height: 13.730px; border-bottom: 1px solid #dcdcdc; }
.row > span { padding: 1.500px 0 0 3px; line-height: 11.500px; white-space: nowrap; overflow: hidden; border-right: 1px solid #e6e6e6; font-family: "Open Sans", sans-serif; font-size: 8.200px; color: #555; }
.row.first { height: 15.300px; }
.row.tall { height: 23.900px; }
.row.sum > span { font-weight: 700; color: #333; }
.row > .num, .row.sum > .num { background: #f0f0f0; color: #9a9a9a; font-weight: 400; text-align: center; padding-left: 0; border-right: 1px solid #c8c8c8; font-size: 7.300px; }
.rows { overflow: hidden; height: 522px; }
.row > .id { font: 700 8.800px/11.500px "Liberation Sans", sans-serif; color: #222; padding-left: 1.500px; }
.row > .name { font: 700 9px/11.500px "Liberation Sans", sans-serif; color: #222; white-space: nowrap; letter-spacing: .15px; }
.row.sum > .id, .row.sum > .name { font-family: "Liberation Sans", sans-serif; font-weight: 400; -webkit-text-stroke: .25px currentColor; }
.row.sum > .name { font-size: 9.200px; letter-spacing: .1px; }
.row > .grn, .row.sum > .grn { color: #2e7f6b; }
.row > .red, .row.sum > .red { color: #c00000; font-weight: 700; -webkit-text-stroke: 0; }
.row.sum > .name.red { font-size: 9px; letter-spacing: .15px; }
.row > .lv1 { padding-left: 13px; }
.row > .lv2 { padding-left: 23px; }
.row > .lv3 { padding-left: 40px; }
.tw::before { content: ""; display: inline-block; border-left: 4px solid transparent; border-bottom: 4px solid #444; margin: 0 4px 0 0; vertical-align: 1px; }
.row > .yel { background: #ffff00; }
.row.sel > .num { background: #cfcfcf; color: #31752f; }
.row.sel > .name { box-shadow: inset 0 0 0 1.500px #2c6e49; position: relative; }
.row.sel { border-bottom: 1px solid #999; }
.row > .x { padding: 0; border: 0; position: relative; }
.row:not(.sum) > .x::before { content: ""; position: absolute; left: 0; top: 3px; width: 1px; height: 6px; background: #777; }

.row.head { height: 23px; background: #e6e6e6; border-bottom: 2px solid #5d9c6a; align-items: stretch; }
.row.head > span { padding: 11px 0 0 3.500px; position: relative; color: #666; border-right: 1px solid #efefef; background: #e6e6e6; font-family: Lato, sans-serif; font-size: 7.500px; }
.row.head > .num { background: #f0f0f0; }
.row.head > .h-item { background: #a6d49f; color: #3a7a3a; }
.row.head > .h-name { background: #c8c8c8; color: #1c6630; font-weight: 700; font-size: 8px; }
.dd { position: absolute; right: 4px; top: 15px; border-left: 2.500px solid transparent; border-right: 2.500px solid transparent; border-top: 3px solid #555; }
.cursor { position: absolute; left: 41px; top: 11px; }

.tooltip { position: absolute; left: 24px; top: 23px; width: 168px; height: 61px; background: #fff; border: 1px solid #e4e4e4; box-shadow: 1px 1px 2px rgba(0,0,0,.15); padding: 4px 6px; color: #666; font-size: 7.600px; line-height: 9.500px; }
.tooltip strong { display: block; font-size: 8px; font-weight: 700; color: #555; margin-bottom: 3px; }
.tooltip p { margin: 0; }

/* chart */
.scale { height: 23px; background: #e6e6e6; border-bottom: 1px solid #ccc; }
.months { display: flex; height: 11px; line-height: 12px; font-size: 7.600px; color: #777; }
.m0 { width: 170px; }
.m1 { width: 216px; padding-left: 3px; border-left: 1px solid #f2f2f2; }
.m2 { padding-left: 3px; border-left: 1px solid #f2f2f2; }
.days { display: flex; height: 11px; line-height: 10px; font-size: 7.600px; color: #777; }
.days span { width: 23.150px; text-align: center; border-right: 1px solid #f0f0f0; }
.plot { display: block; }
.wm-text { font: 700 90px "Liberation Sans", sans-serif; fill: #bfe3f3; stroke: #bfe3f3; stroke-width: 3; }
.wm-logo path { fill: none; stroke: #bfe3f3; stroke-width: 11; }
.vl-today { stroke: #cfcfcf; stroke-width: 2; }
.vl-gray { stroke: #a8a4a6; stroke-width: 1.500; }
.vl-navy { stroke: #5b6b7c; stroke-width: 1.200; }
.vl-red { stroke: #a8808a; stroke-width: 1.400; }
.vl-dot { stroke: #b0b0b0; stroke-dasharray: 1 2; fill: none; }
.hl { stroke: #b4b4b4; fill: none; }
.lnk-red path { fill: none; stroke: #a87078; stroke-width: 1.400; }
.lnk-blue path { fill: none; stroke: #6f8ea8; stroke-width: 1.600; }
.ar-red { fill: #b01c28; }
.ar-blue { fill: #1f4e79; }
.bar-sum path { fill: #454545; }
.bar-red rect { fill: #fb0008; stroke: #f06060; stroke-width: .5; }
.bar-blue rect { fill: #2e6fb4; stroke: #6a9bcf; stroke-width: .5; }

.popup { position: absolute; left: 284px; top: 57px; width: 33px; height: 32px; background: #f5f5f5; border: 1px solid #eaeaea; }
.pop-head { height: 15px; display: flex; align-items: center; justify-content: space-between; font-size: 7.600px; color: #999; padding-left: 2px; }
.pop-head b { width: 11px; height: 11px; background: #d8d8d8; }
.pop-btn { height: 16px; margin: 0 0 0 1px; width: 30px; background: #fff; border: 1px solid #7da2bd; border-radius: 2px; font: 8.300px/14px "Liberation Sans", sans-serif; color: #333; text-align: center; }

/* scrollbars */
.btn { display: block; width: 9px; height: 9px; background: #fff; border: 1px solid #999; position: relative; flex: none; }
.btn::after { content: ""; position: absolute; left: 1.500px; top: 1.500px; border: 2.500px solid transparent; }
.up-b::after { border-bottom-color: #444; top: -1px; }
.dn-b::after { border-top-color: #444; top: 2px; }
.l-b::after { border-right-color: #444; left: -1px; }
.r-b::after { border-left-color: #444; left: 2px; }
.v-thumb { height: 253px; width: 9px; background: #fff; border: 1px solid #b0b0b0; margin-top: 3px; flex: none; }
.v-fill { flex: 1; }
.hbar { height: 12px; background: #f0f0f0; display: flex; align-items: center; }
.hbar .btn:first-child { margin-left: 2px; }
.h-thumb { height: 10px; background: #fff; border: 1px solid #b0b0b0; flex: none; }
.t-left { width: 469px; margin-left: 1px; }
.t-right { width: 252px; }
.h-fill { flex: 1; }
.h-gap { width: 7px; height: 12px; background: #e0e0e0; flex: none; border-left: 1px solid #c8c8c8; border-right: 1px solid #c8c8c8; }
.h-sp { width: 54px; flex: none; }
.t-left + .h-fill { width: 155px; flex: none; }
.t-right + .h-fill { flex: 1; }
.r-b { margin-right: 11px; }

/* status */
.status { height: 13px; background: #f0f0f0; display: flex; align-items: center; font-size: 7.400px; color: #555; position: relative; }
.st-ready { margin-left: 5px; width: 34px; }
.st-pin { margin-right: 2px; }
.views { margin-left: auto; display: flex; align-items: center; }
.view { width: 24.800px; height: 13px; display: flex; align-items: center; justify-content: center; }
.view.on { background: #c8c8c8; }
.zoom { display: flex; align-items: center; gap: 3px; margin-left: 5px; margin-right: 3px; font-size: 8px; }
.slider { width: 62px; height: 1px; background: #888; position: relative; }
.slider b { position: absolute; left: 36px; top: -3px; width: 3px; height: 7px; background: #666; }
```
